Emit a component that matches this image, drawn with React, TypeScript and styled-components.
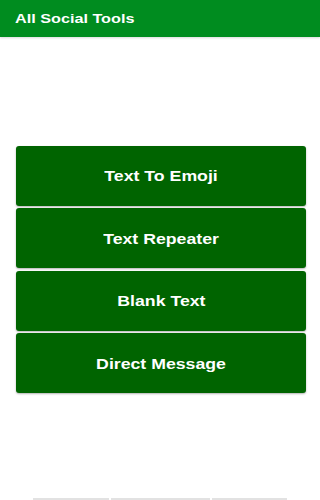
import React from "react";
import styled, { createGlobalStyle } from "styled-components";

const Global = createGlobalStyle`
  html, body { margin: 0; padding: 0; background: #ffffff; }
  #root { min-height: 500px; }
  * { box-sizing: border-box; }
`;

const Page = styled.div`
  display: flex;
  flex-direction: column;
  height: 500px;
  font-family: "Liberation Sans", Arial, sans-serif;
  overflow: hidden;
`;

const TopBar = styled.header`
  height: 37px;
  background: #008c1f;
  display: flex;
  align-items: center;
  padding-left: 15px;
  box-shadow: 0 1px 2px rgba(0, 0, 0, 0.15);
`;

const Title = styled.h1`
  margin: 0;
  color: #ffffff;
  font-size: 13.5px;
  font-weight: 700;
  transform: scaleX(1.2);
  transform-origin: left center;
  white-space: nowrap;
`;

const Main = styled.main`
  flex: 1;
  display: flex;
  flex-direction: column;
  gap: 2.5px;
  padding: 108.5px 14px 0 16px;
`;

const ToolButton = styled.button`
  height: 60px;
  width: 100%;
  border: none;
  border-radius: 3px;
  background: #006400;
  box-shadow: 0 1px 2px rgba(0, 0, 0, 0.3);
  display: flex;
  align-items: center;
  justify-content: center;
  padding: 0;
  cursor: pointer;
`;

const Label = styled.span`
  color: #ffffff;
  font-family: "Liberation Sans", Arial, sans-serif;
  font-size: 15px;
  font-weight: 700;
  transform: scaleX(1.18);
  white-space: nowrap;
`;

const Footer = styled.footer`
  display: flex;
  gap: 2px;
  padding: 0 33px;
  height: 2px;
`;

const Segment = styled.div<{ $w: number }>`
  width: ${(p) => p.$w}px;
  height: 2px;
  background: #e2e2e2;
`;

const tools = ["Text To Emoji", "Text Repeater", "Blank Text", "Direct Message"];

export default function App() {
  return (
    <>
      <Global />
      <Page>
        <TopBar>
          <Title>All Social Tools</Title>
        </TopBar>
        <Main>
          {tools.map((t) => (
            <ToolButton key={t}>
              <Label>{t}</Label>
            </ToolButton>
          ))}
        </Main>
        <Footer>
          <Segment $w={76} />
          <Segment $w={99} />
          <Segment $w={75} />
        </Footer>
      </Page>
    </>
  );
}
